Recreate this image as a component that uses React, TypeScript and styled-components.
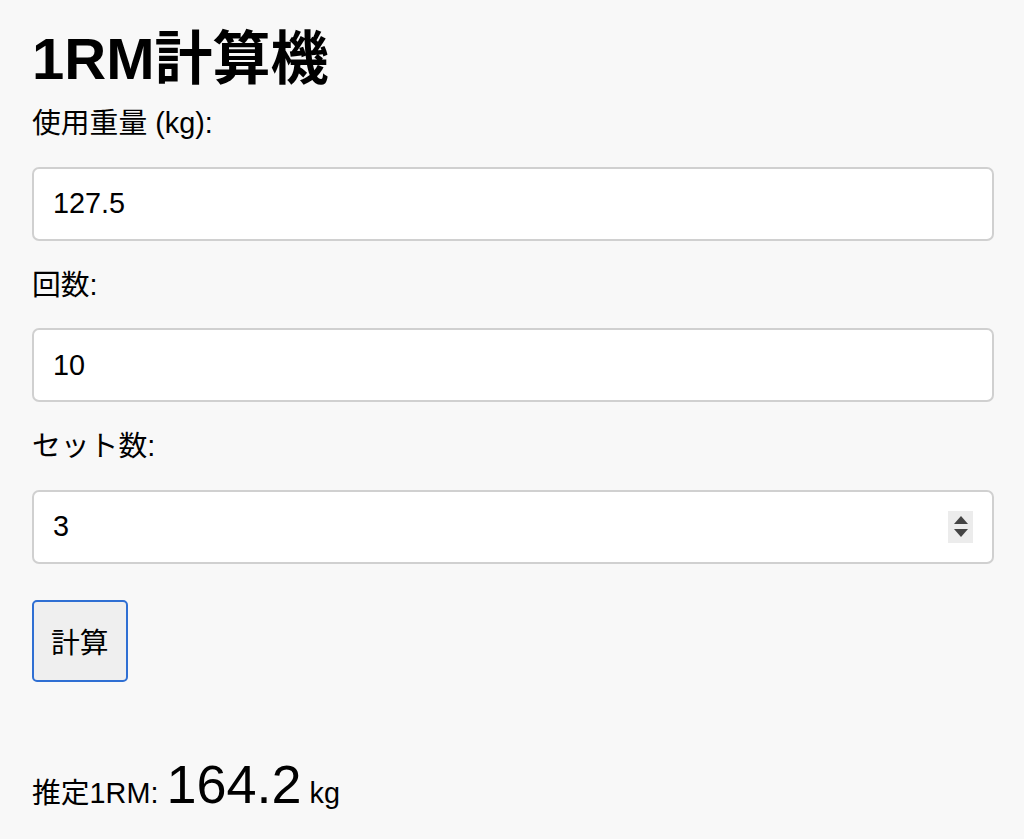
import styled, { createGlobalStyle } from 'styled-components'

const GlobalStyle = createGlobalStyle`
  body {
    margin: 0;
    background-color: #f8f8f8;
    color: #000;
    font-family: "Liberation Sans", "Noto Sans CJK JP", sans-serif;
  }
`

const Container = styled.div`
  padding: 25px 30px 30px 32px;
`

const Title = styled.h1`
  margin: 0 0 14px;
  font-size: 58px;
  line-height: 67px;
  font-weight: bold;
`

const Label = styled.label`
  display: block;
  font-size: 28.8px;
  line-height: 34.6px;
  margin-bottom: 26px;
`

const Field = styled.div`
  position: relative;
  margin-bottom: 27px;
`

const Input = styled.input`
  display: block;
  width: 100%;
  height: 74px;
  box-sizing: border-box;
  padding: 0 19px;
  font-family: "Liberation Sans", "Noto Sans CJK JP", sans-serif;
  font-size: 28.8px;
  color: #000;
  background-color: #fff;
  border: 2px solid #d0d0d0;
  border-radius: 7px;
  outline: none;
  -moz-appearance: textfield;

  &::-webkit-inner-spin-button,
  &::-webkit-outer-spin-button {
    -webkit-appearance: none;
    margin: 0;
  }
`

const Spinner = styled.div`
  position: absolute;
  right: 21px;
  top: 21px;
  width: 25px;
  height: 32px;
  background-color: #ececec;
  display: flex;
  flex-direction: column;
  align-items: center;
  justify-content: center;
  gap: 5px;
`

const Button = styled.button`
  margin-top: 36px;
  display: block;
  height: 82px;
  padding: 0 17px;
  font-family: "Liberation Sans", "Noto Sans CJK JP", sans-serif;
  font-size: 28.8px;
  color: #000;
  background-color: #efefef;
  border: 2px solid #2f6fd3;
  border-radius: 5px;
  cursor: pointer;
`

const Result = styled.div`
  margin-top: 70px;
  font-size: 28.8px;
  line-height: 1.2;
`

const Value = styled.span`
  font-size: 54px;
`

function App() {
  return (
    <>
      <GlobalStyle />
      <Container>
        <Title>1RM計算機</Title>
        <Label htmlFor="weight">使用重量 (kg):</Label>
        <Field>
          <Input id="weight" type="number" defaultValue="127.5" />
        </Field>
        <Label htmlFor="reps">回数:</Label>
        <Field>
          <Input id="reps" type="number" defaultValue="10" />
        </Field>
        <Label htmlFor="sets">セット数:</Label>
        <Field>
          <Input id="sets" type="number" defaultValue="3" />
          <Spinner>
            <svg width="14" height="8" viewBox="0 0 14 8"><path d="M7 0 L14 8 L0 8 Z" fill="#444" /></svg>
            <svg width="14" height="8" viewBox="0 0 14 8"><path d="M0 0 L14 0 L7 8 Z" fill="#444" /></svg>
          </Spinner>
        </Field>
        <Button>計算</Button>
        <Result>
          推定1RM: <Value>164.2</Value> kg
        </Result>
      </Container>
    </>
  )
}

export default App
